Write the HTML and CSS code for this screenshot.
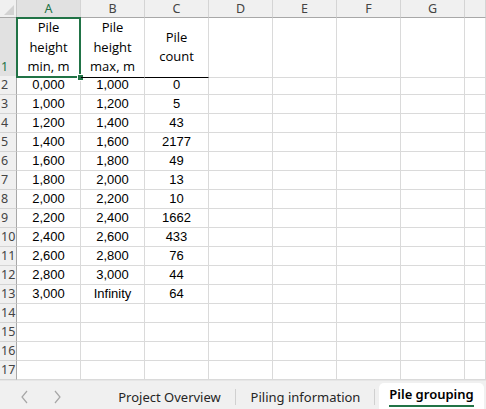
FILE: index.html
```html
<!DOCTYPE html>
<html lang="en">
<head>
    <meta charset="UTF-8">
    <title>Pile grouping</title>
    <link rel="stylesheet" href="styles.css">
</head>
<body>
    <div class="sheet">
        <div class="row col-heads">
            <div class="corner"><span class="corner-mark"></span></div>
            <div class="col-head active">A</div>
            <div class="col-head">B</div>
            <div class="col-head">C</div>
            <div class="col-head">D</div>
            <div class="col-head">E</div>
            <div class="col-head">F</div>
            <div class="col-head">G</div>
            <div class="col-head"></div>
        </div>

        <div class="row title-row">
            <div class="row-head active">1</div>
            <div class="cell title selected">
                <span>Pile<br>height<br>min, m</span>
                <span class="selection"><span class="handle"></span></span>
            </div>
            <div class="cell title underline"><span>Pile<br>height<br>max, m</span></div>
            <div class="cell title underline"><span>Pile<br>count</span></div>
            <div class="cell"></div><div class="cell"></div><div class="cell"></div><div class="cell"></div><div class="cell"></div>
        </div>

        <div class="row"><div class="row-head">2</div><div class="cell">0,000</div><div class="cell">1,000</div><div class="cell">0</div><div class="cell"></div><div class="cell"></div><div class="cell"></div><div class="cell"></div><div class="cell"></div></div>
        <div class="row"><div class="row-head">3</div><div class="cell">1,000</div><div class="cell">1,200</div><div class="cell">5</div><div class="cell"></div><div class="cell"></div><div class="cell"></div><div class="cell"></div><div class="cell"></div></div>
        <div class="row"><div class="row-head">4</div><div class="cell">1,200</div><div class="cell">1,400</div><div class="cell">43</div><div class="cell"></div><div class="cell"></div><div class="cell"></div><div class="cell"></div><div class="cell"></div></div>
        <div class="row"><div class="row-head">5</div><div class="cell">1,400</div><div class="cell">1,600</div><div class="cell">2177</div><div class="cell"></div><div class="cell"></div><div class="cell"></div><div class="cell"></div><div class="cell"></div></div>
        <div class="row"><div class="row-head">6</div><div class="cell">1,600</div><div class="cell">1,800</div><div class="cell">49</div><div class="cell"></div><div class="cell"></div><div class="cell"></div><div class="cell"></div><div class="cell"></div></div>
        <div class="row"><div class="row-head">7</div><div class="cell">1,800</div><div class="cell">2,000</div><div class="cell">13</div><div class="cell"></div><div class="cell"></div><div class="cell"></div><div class="cell"></div><div class="cell"></div></div>
        <div class="row"><div class="row-head">8</div><div class="cell">2,000</div><div class="cell">2,200</div><div class="cell">10</div><div class="cell"></div><div class="cell"></div><div class="cell"></div><div class="cell"></div><div class="cell"></div></div>
        <div class="row"><div class="row-head">9</div><div class="cell">2,200</div><div class="cell">2,400</div><div class="cell">1662</div><div class="cell"></div><div class="cell"></div><div class="cell"></div><div class="cell"></div><div class="cell"></div></div>
        <div class="row"><div class="row-head">10</div><div class="cell">2,400</div><div class="cell">2,600</div><div class="cell">433</div><div class="cell"></div><div class="cell"></div><div class="cell"></div><div class="cell"></div><div class="cell"></div></div>
        <div class="row"><div class="row-head">11</div><div class="cell">2,600</div><div class="cell">2,800</div><div class="cell">76</div><div class="cell"></div><div class="cell"></div><div class="cell"></div><div class="cell"></div><div class="cell"></div></div>
        <div class="row"><div class="row-head">12</div><div class="cell">2,800</div><div class="cell">3,000</div><div class="cell">44</div><div class="cell"></div><div class="cell"></div><div class="cell"></div><div class="cell"></div><div class="cell"></div></div>
        <div class="row"><div class="row-head">13</div><div class="cell">3,000</div><div class="cell">Infinity</div><div class="cell">64</div><div class="cell"></div><div class="cell"></div><div class="cell"></div><div class="cell"></div><div class="cell"></div></div>
        <div class="row"><div class="row-head">14</div><div class="cell"></div><div class="cell"></div><div class="cell"></div><div class="cell"></div><div class="cell"></div><div class="cell"></div><div class="cell"></div><div class="cell"></div></div>
        <div class="row"><div class="row-head">15</div><div class="cell"></div><div class="cell"></div><div class="cell"></div><div class="cell"></div><div class="cell"></div><div class="cell"></div><div class="cell"></div><div class="cell"></div></div>
        <div class="row"><div class="row-head">16</div><div class="cell"></div><div class="cell"></div><div class="cell"></div><div class="cell"></div><div class="cell"></div><div class="cell"></div><div class="cell"></div><div class="cell"></div></div>
        <div class="row"><div class="row-head">17</div><div class="cell"></div><div class="cell"></div><div class="cell"></div><div class="cell"></div><div class="cell"></div><div class="cell"></div><div class="cell"></div><div class="cell"></div></div>
    </div>

    <div class="tabbar">
        <div class="tab-nav">
            <svg width="10" height="14" viewBox="0 0 10 14"><polyline points="7,1 2,7 7,13" fill="none" stroke="#a6a6a6" stroke-width="1.2"/></svg>
            <svg width="10" height="14" viewBox="0 0 10 14"><polyline points="3,1 8,7 3,13" fill="none" stroke="#a6a6a6" stroke-width="1.2"/></svg>
        </div>
        <div class="tab">Project Overview</div>
        <div class="tab second">Piling information</div>
        <div class="tab current"><span>Pile grouping</span></div>
    </div>
</body>
</html>
```

FILE: styles.css
```css
body {
    margin: 0;
    width: 486px;
    height: 409px;
    overflow: hidden;
    background: #ffffff;
    font-family: "Liberation Sans", Arial, sans-serif;
    color: #000;
}
.sheet {
    height: 380px;
    overflow: hidden;
}
.row {
    display: grid;
    grid-template-columns: 17px repeat(7, 64px) 1fr;
    height: 19px;
}
.col-heads {
    height: 18px;
}
.title-row {
    height: 58px;
}
.corner, .col-head, .row-head, .cell {
    box-sizing: border-box;
    border-right: 1px solid #dadada;
    border-bottom: 1px solid #dadada;
}
.corner {
    position: relative;
    background: #f0f0f0;
    border-right-color: #c6c6c6;
    border-bottom-color: #a8a8a8;
}
.corner-mark {
    position: absolute;
    right: 2px;
    bottom: 2px;
    width: 0;
    height: 0;
    border-left: 10px solid transparent;
    border-bottom: 10px solid #d2d2d2;
}
.col-head {
    background: #f0f0f0;
    border-right-color: #d4d4d4;
    border-bottom-color: #a8a8a8;
    font-family: "Noto Sans", "Open Sans", sans-serif;
    font-size: 12.5px;
    line-height: 17px;
    text-align: center;
    color: #444;
}
.col-head.active {
    background: #e1e1e1;
    color: #217346;
}
.row-head {
    background: #f0f0f0;
    border-right-color: #a8a8a8;
    border-bottom-color: #d4d4d4;
    font-family: "Noto Sans", "Open Sans", sans-serif;
    font-size: 12.5px;
    line-height: 18px;
    padding-left: 1px;
    color: #444;
    display: flex;
    align-items: flex-end;
    overflow: hidden;
    white-space: nowrap;
}
.title-row .row-head {
    line-height: 20px;
}
.row-head.active {
    background: #e1e1e1;
    color: #217346;
}
.cell {
    font-size: 13px;
    line-height: 18px;
    text-align: center;
}
.cell.title {
    position: relative;
    display: flex;
    align-items: center;
    justify-content: center;
    font-family: "Open Sans", "Noto Sans", sans-serif;
    font-size: 13px;
    line-height: 19.5px;
}
.cell.underline {
    border-bottom-color: #000;
}
.selection {
    position: absolute;
    left: -1px;
    top: -1px;
    right: -1px;
    bottom: -1px;
    border: 2px solid #217346;
}
.handle {
    position: absolute;
    right: -5px;
    bottom: -5px;
    width: 5px;
    height: 5px;
    background: #217346;
    border: 1px solid #fff;
}
.tabbar {
    display: flex;
    height: 29px;
    background: #f0f0f0;
    border-top: 1px solid #e6e6e6;
    box-sizing: border-box;
    font-family: "Noto Sans", "Open Sans", sans-serif;
    font-size: 13px;
    color: #262626;
}
.tab-nav {
    width: 103px;
    display: flex;
    align-items: center;
    gap: 22px;
    padding: 3px 0 0 20px;
    box-sizing: border-box;
}
.tab {
    width: 133px;
    display: flex;
    align-items: center;
    justify-content: center;
    padding-top: 3px;
    box-sizing: border-box;
    position: relative;
}
.tab::after {
    content: "";
    position: absolute;
    right: 0;
    top: 8px;
    bottom: 4px;
    width: 1px;
    background: #d0d0d0;
}
.tab.second {
    width: 139px;
}
.tab.current {
    width: 105px;
    margin-left: 4px;
    margin-top: 2px;
    padding-top: 0;
    background: #fff;
    border-radius: 5px 5px 0 0;
    font-weight: 600;
    color: #000;
}
.tab.current::after {
    display: none;
}
.tab.current span {
    padding-bottom: 2px;
    border-bottom: 2px solid #217346;
}
```
